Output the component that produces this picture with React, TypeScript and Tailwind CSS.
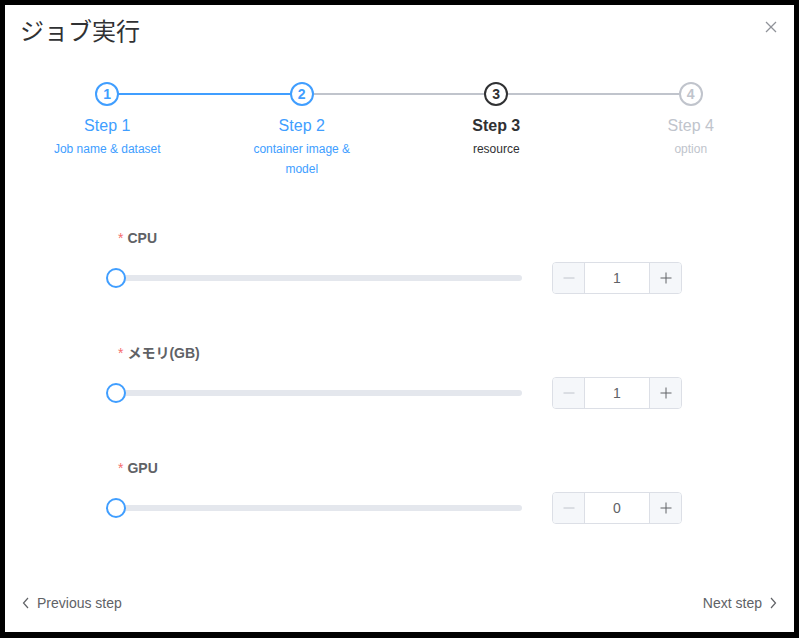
import React from "react";

type StepStatus = "finish" | "process" | "wait";

const steps: { title: string; desc: string; status: StepStatus }[] = [
  { title: "Step 1", desc: "Job name & dataset", status: "finish" },
  { title: "Step 2", desc: "container image & model", status: "finish" },
  { title: "Step 3", desc: "resource", status: "process" },
  { title: "Step 4", desc: "option", status: "wait" },
];

const resources = [
  { label: "CPU", value: 1 },
  { label: "メモリ(GB)", value: 1 },
  { label: "GPU", value: 0 },
];

const font = { fontFamily: '"Liberation Sans", Arial, "Noto Sans CJK JP", sans-serif' };

function Step({ index, title, desc, status, last, lineBlue }: { index: number; title: string; desc: string; status: StepStatus; last: boolean; lineBlue: boolean }) {
  const circle =
    status === "finish"
      ? "border-[#409eff] text-[#409eff]"
      : status === "process"
        ? "border-[#303133] text-[#303133]"
        : "border-[#c0c4cc] text-[#c0c4cc]";
  const titleCls =
    status === "finish" ? "text-[#409eff]" : status === "process" ? "text-[#303133] font-bold" : "text-[#c0c4cc]";
  const descCls = status === "finish" ? "text-[#409eff]" : status === "process" ? "text-[#303133]" : "text-[#c0c4cc]";

  return (
    <div className="relative flex-1 flex flex-col items-center">
      {!last && (
        <div className={`absolute left-1/2 top-[11px] w-full h-[2px] ${lineBlue ? "bg-[#409eff]" : "bg-[#c0c4cc]"}`} />
      )}
      <div className={`relative z-10 w-6 h-6 rounded-full border-2 bg-white flex items-center justify-center text-[14px] font-bold ${circle}`}>
        {index}
      </div>
      <div className={`mt-[8px] text-[16px] leading-[24px] ${titleCls}`}>{title}</div>
      <div className={`mt-[1px] px-[20%] text-center text-[12px] leading-[20px] ${descCls}`}>{desc}</div>
    </div>
  );
}

function ResourceRow({ label, value }: { label: string; value: number }) {
  return (
    <div className="mb-[49px]">
      <div className="h-5 flex items-center text-[14px] font-bold text-[#606266]">
        <span className="text-[#f56c6c] font-normal mr-1 ml-[2px]">*</span>
        {label}
      </div>
      <div className="mt-[14px] h-8 flex items-center">
        <div className="relative flex-1 h-[6px] rounded-[3px] bg-[#e4e7ed]">
          <div className="absolute left-0 top-1/2 -translate-x-1/2 -translate-y-1/2 w-5 h-5 rounded-full border-2 border-[#409eff] bg-white" />
        </div>
        <div className="ml-[30px] w-[130px] h-8 flex border border-[#dcdfe6] rounded-[4px] overflow-hidden">
          <div className="w-8 bg-[#f5f7fa] border-r border-[#dcdfe6] flex items-center justify-center">
            <svg width="12" height="12" viewBox="0 0 12 12">
              <line x1="0.5" y1="6" x2="11.5" y2="6" stroke="#c0c4cc" strokeWidth="1" />
            </svg>
          </div>
          <div className="flex-1 flex items-center justify-center text-[14px] text-[#606266]">{value}</div>
          <div className="w-8 bg-[#f5f7fa] border-l border-[#dcdfe6] flex items-center justify-center">
            <svg width="12" height="12" viewBox="0 0 12 12">
              <line x1="0.5" y1="6" x2="11.5" y2="6" stroke="#606266" strokeWidth="1" />
              <line x1="6" y1="0.5" x2="6" y2="11.5" stroke="#606266" strokeWidth="1" />
            </svg>
          </div>
        </div>
      </div>
    </div>
  );
}

export default function App() {
  return (
    <div className="w-[799px] h-[638px] bg-black pt-[5px] pl-[5px] pr-[5px] pb-[6px]" style={font}>
      <div className="w-full h-full bg-white flex flex-col">
        {/* Header */}
        <div className="pt-[10px] pl-[15px] pr-[17px] flex items-center justify-between">
          <h1 className="text-[24px] leading-[30px] text-[#303133]" style={{ fontFamily: '"Noto Sans CJK JP", sans-serif', fontWeight: 400 }}>
            ジョブ実行
          </h1>
          <svg width="12" height="12" viewBox="0 0 12 12" className="-mt-[6px]">
            <line x1="1" y1="1" x2="11" y2="11" stroke="#909399" strokeWidth="1.2" />
            <line x1="11" y1="1" x2="1" y2="11" stroke="#909399" strokeWidth="1.2" />
          </svg>
        </div>

        {/* Steps */}
        <div className="mt-[37px] pl-[5px] pr-[6px] flex items-start">
          {steps.map((s, i) => (
            <Step key={s.title} index={i + 1} {...s} last={i === steps.length - 1} lineBlue={i === 0} />
          ))}
        </div>

        {/* Resources */}
        <div className="mt-[49px] ml-[111px] w-[566px]">
          {resources.map((r) => (
            <ResourceRow key={r.label} {...r} />
          ))}
        </div>

        {/* Footer */}
        <div className="mt-auto pb-[19px] pl-[17px] pr-[17px] flex items-center justify-between text-[14px] leading-[20px] text-[#606266]">
          <div className="flex items-center">
            <svg width="8" height="12" viewBox="0 0 8 12" className="mr-[7px]">
              <polyline points="6,1 1.5,6 6,11" fill="none" stroke="#606266" strokeWidth="1.2" />
            </svg>
            Previous step
          </div>
          <div className="flex items-center">
            Next step
            <svg width="8" height="12" viewBox="0 0 8 12" className="ml-[7px]">
              <polyline points="2,1 6.5,6 2,11" fill="none" stroke="#606266" strokeWidth="1.2" />
            </svg>
          </div>
        </div>
      </div>
    </div>
  );
}
